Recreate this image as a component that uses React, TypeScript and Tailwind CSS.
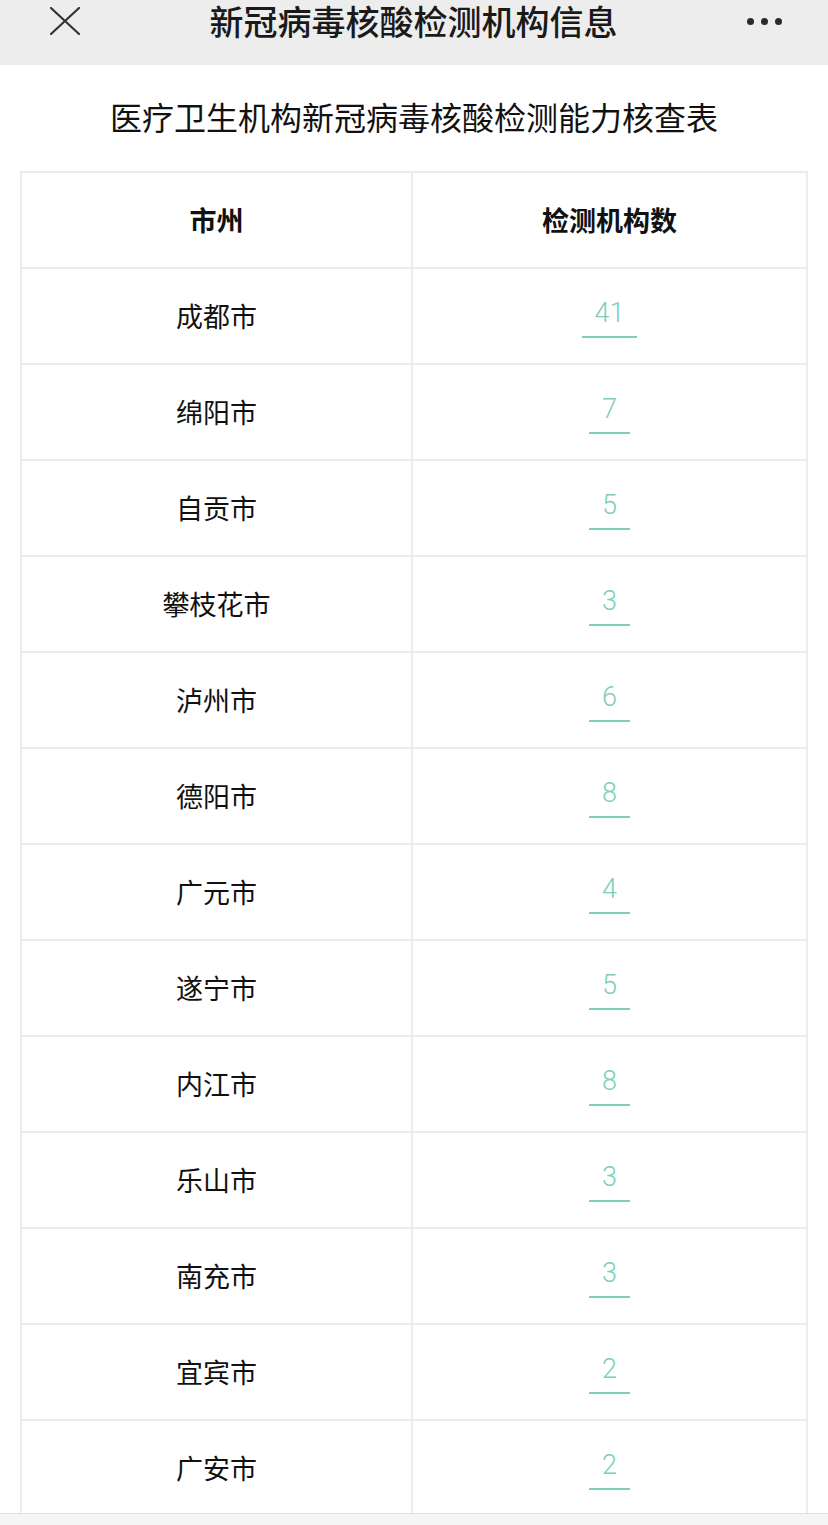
const rows: [string, number][] = [
  ["成都市", 41],
  ["绵阳市", 7],
  ["自贡市", 5],
  ["攀枝花市", 3],
  ["泸州市", 6],
  ["德阳市", 8],
  ["广元市", 4],
  ["遂宁市", 5],
  ["内江市", 8],
  ["乐山市", 3],
  ["南充市", 3],
  ["宜宾市", 2],
  ["广安市", 2],
];

const App = () => {
  return (
    <div className="flex h-[1525px] w-[828px] flex-col overflow-hidden bg-white font-['Noto_Sans_CJK_SC','Noto_Sans',sans-serif] text-[#111]">
      <div className="h-[65px] shrink-0 bg-[#ededed]">
        <div className="flex h-[42px] items-center justify-between pl-[50px] pr-[46px]">
          <svg width="30" height="28" viewBox="0 0 30 28" className="text-[#333]">
            <path
              d="M1 1 L29 27 M29 1 L1 27"
              stroke="currentColor"
              strokeWidth="2.2"
              strokeLinecap="round"
            />
          </svg>
          <h1 className="text-[34px] font-medium leading-[40px] text-[#1a1a1a]">
            新冠病毒核酸检测机构信息
          </h1>
          <div className="flex items-center gap-[7px]">
            <span className="h-[7px] w-[7px] rounded-full bg-[#2b2b2b]" />
            <span className="h-[7px] w-[7px] rounded-full bg-[#2b2b2b]" />
            <span className="h-[7px] w-[7px] rounded-full bg-[#2b2b2b]" />
          </div>
        </div>
      </div>

      <div className="flex min-h-0 flex-1 flex-col overflow-hidden">
        <h2 className="flex h-[106px] shrink-0 items-center justify-center pb-[4px] text-[32px] leading-none">
          医疗卫生机构新冠病毒核酸检测能力核查表
        </h2>

        <div className="mx-[20px] border-x-2 border-t-2 border-[#ececec]">
          <div className="flex h-[96px] border-b-2 border-[#ececec]">
            <div className="flex w-[391px] items-center justify-center border-r-2 border-[#ececec] text-[27px] font-bold">
              市州
            </div>
            <div className="flex flex-1 items-center justify-center text-[27px] font-bold">
              检测机构数
            </div>
          </div>
          {rows.map(([city, n]) => (
            <div
              key={city}
              className="flex h-[96px] shrink-0 border-b-2 border-[#ececec]"
            >
              <div className="flex w-[391px] items-center justify-center border-r-2 border-[#ececec] text-[27px]">
                {city}
              </div>
              <div className="flex flex-1 items-center justify-center">
                <span className="mt-[6px] inline-block border-b-2 border-[#7ccfb8] px-[13px] pb-[9px] font-['Roboto',sans-serif] text-[27px] font-light leading-[27px] text-[#7ccfb8]">
                  {n}
                </span>
              </div>
            </div>
          ))}
        </div>
      </div>

      <div className="h-[12px] shrink-0 border-t border-[#e2e2e2] bg-[#f5f5f5]" />
    </div>
  );
};

export default App;
